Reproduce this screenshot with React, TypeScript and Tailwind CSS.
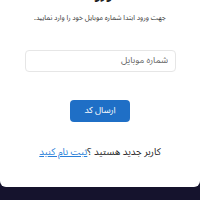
export default function App() {
  return (
    <div
      dir="rtl"
      className="min-h-[200px] w-[200px] bg-[#15132d]"
      style={{ fontFamily: '"Noto Sans Arabic", "Noto Naskh Arabic", "DejaVu Sans", sans-serif' }}
    >
      <div className="h-[187px] overflow-hidden rounded-b-[6px] bg-white">
        <h1 className="-mt-[13px] text-center text-[13px] font-bold leading-[16px] text-[#222]">ورود</h1>
        <p className="mt-[9px] text-center text-[7px] leading-[12px] text-[#333]">
          جهت ورود ابتدا شماره موبایل خود را وارد نمایید.
        </p>
        <div className="mt-[22px] px-[24px] pl-[25px]">
          <input
            type="text"
            placeholder="شماره موبایل"
            className="h-[22px] w-full rounded-[4px] border border-[#e6e6e6] px-[7px] text-[9px] text-[#333] outline-none placeholder:text-[#666]"
          />
        </div>
        <div className="mt-[28px] flex justify-center">
          <button className="h-[22px] w-[60px] rounded-[4px] bg-[#1f6fc6] text-[8.8px] text-white">
            ارسال کد
          </button>
        </div>
        <p className="mt-[23px] text-center text-[9.7px] leading-[14px] text-[#222]">
          کاربر جدید هستید ؟
          <a href="#" className="text-[#2a7fd9] underline">ثبت نام کنید</a>
        </p>
      </div>
    </div>
  );
}
